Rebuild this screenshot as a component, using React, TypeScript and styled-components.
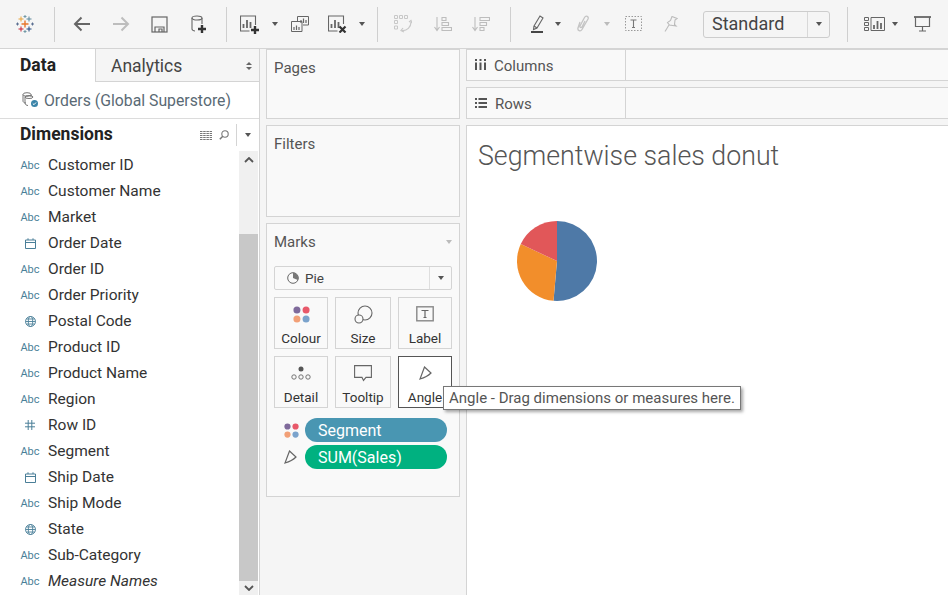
import React from 'react';
import styled, { createGlobalStyle } from 'styled-components';

const FONT = `Roboto, "Noto Sans", Arial, sans-serif`;
const TEAL = '#4a7f98';

const GlobalStyle = createGlobalStyle`
  html, body { margin: 0; padding: 0; background: #fff; overflow: hidden; }
  body { font-family: ${FONT}; }
`;

const Page = styled.div`
  position: relative;
  width: 948px;
  height: 595px;
  overflow: hidden;
  display: flex;
  flex-direction: column;
  background: #f5f5f5;
`;

const Toolbar = styled.div`
  height: 48px;
  flex: none;
  display: flex;
  align-items: center;
  border-bottom: 1px solid #d4d4d4;
  background: #f5f5f5;
`;

const ToolButton = styled.div<{ $w: number; $pl?: number }>`
  flex: none;
  box-sizing: content-box;
  width: ${p => p.$w}px;
  padding-left: ${p => p.$pl ?? 0}px;
  height: 32px;
  display: flex;
  align-items: center;
  justify-content: center;
`;

const Sep = styled.div<{ $ml: number }>`
  flex: none;
  width: 1px;
  height: 35px;
  margin-left: ${p => p.$ml}px;
  background: #cfcfcf;
`;

const Caret = styled.span<{ $c?: string }>`
  width: 0;
  height: 0;
  border-left: 3.5px solid transparent;
  border-right: 3.5px solid transparent;
  border-top: 4px solid ${p => p.$c ?? '#555'};
`;

const ModeSelect = styled.div`
  flex: none;
  width: 127px;
  height: 27px;
  margin-left: 18px;
  box-sizing: border-box;
  border: 1px solid #cdcdcd;
  border-radius: 3px;
  display: flex;
  align-items: center;
  font-size: 18px;
  color: #444;
`;

const ModeLabel = styled.div`
  flex: 1;
  padding: 0 0 2px 8px;
`;

const ModeArrow = styled.div`
  width: 21px;
  height: 100%;
  border-left: 1px solid #d8d8d8;
  display: flex;
  align-items: center;
  justify-content: center;
`;

const Body = styled.div`
  flex: 1;
  min-height: 0;
  display: flex;
`;

const DataPane = styled.div`
  flex: none;
  width: 260px;
  box-sizing: border-box;
  border-right: 1px solid #d4d4d4;
  background: #fff;
  display: flex;
  flex-direction: column;
`;

const Tabs = styled.div`
  height: 33px;
  flex: none;
  display: flex;
`;

const DataTab = styled.div`
  width: 95px;
  padding: 6px 0 0 20px;
  box-sizing: border-box;
  font-size: 17.5px;
  font-weight: 700;
  color: #222;
`;

const AnalyticsTab = styled.div`
  flex: 1;
  box-sizing: border-box;
  border-left: 1px solid #d4d4d4;
  border-bottom: 1px solid #d4d4d4;
  background: #f5f5f5;
  display: flex;
  align-items: center;
  justify-content: space-between;
  padding: 2px 7px 0 15px;
  font-size: 17.5px;
  color: #444;
`;

const Spinner = styled.span`
  display: flex;
  flex-direction: column;
  gap: 2px;
`;

const SpinUp = styled.span`
  width: 0;
  height: 0;
  border-left: 3px solid transparent;
  border-right: 3px solid transparent;
  border-bottom: 3px solid #666;
`;

const SpinDown = styled(SpinUp)`
  border-bottom: 0;
  border-top: 3px solid #666;
`;

const SourceRow = styled.div`
  height: 37px;
  flex: none;
  box-sizing: border-box;
  border-bottom: 1px solid #dcdcdc;
  display: flex;
  align-items: center;
  gap: 5px;
  padding: 0 0 0 21px;
  font-size: 15.8px;
  color: #5a6a75;
`;

const DimHeader = styled.div`
  height: 32px;
  flex: none;
  display: flex;
  align-items: center;
  padding-left: 20px;
`;

const DimTitle = styled.div`
  flex: 1;
  padding-bottom: 2px;
  font-size: 17.5px;
  font-weight: 700;
  color: #222;
`;

const HeadIcons = styled.div`
  display: flex;
  align-items: center;
  gap: 7px;
  margin-right: 7px;
`;

const HeadMenu = styled.div`
  width: 22px;
  height: 22px;
  border-left: 1px solid #d4d4d4;
  display: flex;
  align-items: center;
  justify-content: center;
`;

const FieldArea = styled.div`
  flex: 1;
  min-height: 0;
  display: flex;
`;

const FieldList = styled.div`
  flex: 1;
  padding-top: 1px;
  overflow: hidden;
`;

const FieldRow = styled.div`
  height: 26px;
  display: flex;
  align-items: center;
`;

const TypeIcon = styled.span`
  flex: none;
  width: 18px;
  margin: 0 9px 0 21px;
  display: flex;
  justify-content: center;
  font-size: 11px;
  color: ${TEAL};
`;

const FieldName = styled.span<{ $italic?: boolean }>`
  font-size: 15.5px;
  color: #333;
  white-space: nowrap;
  font-style: ${p => (p.$italic ? 'italic' : 'normal')};
`;

const Scrollbar = styled.div`
  flex: none;
  width: 19px;
  margin-right: 1px;
  background: #f0f0f0;
  display: flex;
  flex-direction: column;
`;

const ScrollEnd = styled.div<{ $h: number }>`
  height: ${p => p.$h}px;
  flex: none;
  display: flex;
  align-items: center;
  justify-content: center;
`;

const ScrollGap = styled.div`
  height: 65px;
  flex: none;
`;

const ScrollThumb = styled.div`
  flex: 1;
  background: #c8c8c8;
`;

const CardColumn = styled.div`
  flex: none;
  width: 206px;
  box-sizing: border-box;
  padding: 0 6px 98px;
  display: flex;
  flex-direction: column;
  gap: 6px;
`;

const Card = styled.div<{ $h?: number }>`
  flex: ${p => (p.$h ? 'none' : 1)};
  height: ${p => (p.$h ? `${p.$h}px` : 'auto')};
  box-sizing: border-box;
  border: 1px solid #d4d4d4;
  background: #f9f9f9;
  padding: 9px 7px 0;
`;

const CardTitle = styled.div`
  font-size: 15px;
  line-height: 18px;
  color: #555;
  display: flex;
  justify-content: space-between;
  align-items: center;
`;

const MarkSelect = styled.div`
  height: 24px;
  margin-top: 15px;
  box-sizing: border-box;
  border: 1px solid #d4d4d4;
  border-radius: 2px;
  display: flex;
  align-items: center;
  font-size: 13.5px;
  color: #444;
`;

const MarkSelectLabel = styled.div`
  flex: 1;
  display: flex;
  align-items: center;
  gap: 6px;
  padding-left: 12px;
`;

const MarkSelectArrow = styled.div`
  width: 21px;
  height: 100%;
  border-left: 1px solid #dedede;
  display: flex;
  align-items: center;
  justify-content: center;
`;

const MarkGrid = styled.div`
  margin-top: 7px;
  display: grid;
  grid-template-columns: 54px 56px 54px;
  grid-auto-rows: 52px;
  gap: 7px;
`;

const MarkButton = styled.div<{ $active?: boolean }>`
  box-sizing: border-box;
  border: 1px solid ${p => (p.$active ? '#555' : '#d4d4d4')};
  background: ${p => (p.$active ? '#fff' : '#f9f9f9')};
  display: flex;
  flex-direction: column;
  align-items: center;
  font-size: 13.5px;
  line-height: 17px;
  color: #333;
`;

const MarkIcon = styled.div`
  height: 32px;
  flex: none;
  display: flex;
  align-items: center;
  justify-content: center;
`;

const PillRow = styled.div`
  display: flex;
  align-items: center;
  height: 24px;
  padding-left: 10px;
  margin-bottom: 3px;
`;

const PillIcon = styled.div`
  width: 21px;
  flex: none;
  display: flex;
`;

const Pill = styled.div<{ $bg: string }>`
  width: 142px;
  height: 24px;
  border-radius: 12px;
  background: ${p => p.$bg};
  color: #fff;
  font-size: 16px;
  line-height: 25px;
  padding-left: 13px;
  box-sizing: border-box;
`;

const PillList = styled.div`
  margin-top: 10px;
`;

const ViewColumn = styled.div`
  flex: 1;
  min-width: 0;
  display: flex;
  flex-direction: column;
  gap: 6px;
`;

const Shelf = styled.div<{ $h: number }>`
  height: ${p => p.$h}px;
  flex: none;
  box-sizing: border-box;
  border: 1px solid #d4d4d4;
  border-right: 0;
  background: #f9f9f9;
  display: flex;
`;

const ShelfLabel = styled.div`
  width: 159px;
  box-sizing: border-box;
  border-right: 1px solid #d4d4d4;
  display: flex;
  align-items: center;
  gap: 8px;
  padding: 2px 0 0 8px;
  font-size: 15px;
  color: #555;

  svg {
    margin-bottom: 3px;
  }
`;

const ViewCard = styled.div`
  flex: 1;
  min-height: 0;
  box-sizing: border-box;
  border: 1px solid #d4d4d4;
  border-right: 0;
  border-bottom: 0;
  background: #fff;
  padding: 12px 0 0 11px;
`;

const ViewTitle = styled.div`
  font-size: 26.75px;
  font-weight: 300;
  color: #555;
  line-height: 36px;
`;

const PieWrap = styled.div`
  margin: 46px 0 0 38px;
  width: 82px;
  height: 82px;
`;

const Tooltip = styled.div`
  position: absolute;
  left: 443px;
  top: 386px;
  height: 24px;
  box-sizing: border-box;
  width: 298px;
  border: 1px solid #777;
  background: #fff;
  box-shadow: 2px 2px 3px rgba(0, 0, 0, 0.35);
  padding-left: 5px;
  font-size: 15px;
  line-height: 23px;
  color: #555;
  white-space: nowrap;
`;

const LogoIcon = () => (
  <svg width="18" height="18" viewBox="0 0 18 18" fill="none" strokeWidth="1">
    <path d="M9 5.500v7M5.500 9h7" stroke="#e8762b" strokeWidth="1.400" />
    <path d="M5 1.500v5M2.500 4h5" stroke="#e8a33b" />
    <path d="M13 1.500v5M10.500 4h5" stroke="#5b879b" />
    <path d="M5 11.500v5M2.500 14h5" stroke="#c72035" />
    <path d="M13 11.500v5M10.500 14h5" stroke="#1f447e" />
    <path d="M9 0v3M7.500 1.500h3M9 15v3M7.500 16.500h3" stroke="#7199a6" />
    <path d="M1.500 7.500v3M0 9h3M16.500 7.500v3M15 9h3" stroke="#5b6f91" />
  </svg>
);

const Arrow = ({ c, flip }: { c: string; flip?: boolean }) => (
  <svg width="18" height="16" viewBox="0 0 18 16" fill="none" stroke={c} strokeWidth="2" style={flip ? { transform: 'scaleX(-1)' } : undefined}>
    <path d="M17 8H2M8.500 1.500 2 8l6.500 6.500" />
  </svg>
);

const SaveIcon = () => (
  <svg width="17" height="17" viewBox="0 0 17 17" fill="none" stroke="#666" strokeWidth="1.200">
    <rect x="1" y="1" width="15" height="15" />
    <path d="M4 16v-5h9v5M8 16v-3h3v3" />
  </svg>
);

const Plus = ({ x, y }: { x: number; y: number }) => (
  <path d={`M${x - 4} ${y}h8M${x} ${y - 4}v8`} stroke="#333" strokeWidth="2.400" fill="none" />
);

const DataAddIcon = () => (
  <svg width="16" height="19" viewBox="0 0 16 19" fill="none" stroke="#666" strokeWidth="1.100">
    <ellipse cx="6" cy="3" rx="5" ry="2" />
    <path d="M1 3v11c0 1 1.500 2 3 2M11 3v6" />
    <Plus x={11} y={14} />
  </svg>
);

const Bars = ({ x, y, c = '#666' }: { x: number; y: number; c?: string }) => (
  <path d={`M${x} ${y}v-4M${x + 3.5} ${y}v-8M${x + 7} ${y}v-6`} stroke={c} strokeWidth="1.800" fill="none" />
);

const NewSheetIcon = () => (
  <svg width="20" height="19" viewBox="0 0 20 19" fill="none" stroke="#666" strokeWidth="1.100">
    <path d="M15.500 10V1H.5v15h9" />
    <Bars x={3.5} y={13} />
    <Plus x={15} y={15} />
  </svg>
);

const DuplicateIcon = () => (
  <svg width="18" height="16" viewBox="0 0 18 16" fill="none" stroke="#666" strokeWidth="1">
    <path d="M6.500 5V.5h11V9H12" />
    <path d="M.5 5.500H11v10H.5z" />
    <path d="M10 7V4M12.500 7V2.500M15 7V4M3 14v-3M5.500 14v-4.500M8 14v-3" strokeWidth="1.200" />
  </svg>
);

const ClearIcon = () => (
  <svg width="19" height="18" viewBox="0 0 19 18" fill="none" stroke="#666" strokeWidth="1.100">
    <path d="M15.500 9V1H.5v15h9" />
    <Bars x={3.5} y={13} />
    <path d="M11.500 11.500l6 6M17.500 11.500l-6 6" stroke="#333" strokeWidth="2.200" />
  </svg>
);

const SwapIcon = () => (
  <svg width="18" height="18" viewBox="0 0 18 18" fill="none" stroke="#c8c8c8" strokeWidth="1">
    <path d="M.5.5h3v3h-3zM5.500.5h3v3h-3zM10.500.5h3v3h-3zM.5 5.500h3v3h-3zM.5 11h3v3h-3z" />
    <path d="M17 7c0 5-4 9-9 8.500M15 7l2-1.500L18 8M9 13l-2 2.500L10 17" strokeWidth="1.200" />
  </svg>
);

const SortIcon = ({ flip }: { flip?: boolean }) => (
  <svg width="18" height="16" viewBox="0 0 18 16" fill="none" stroke="#bdbdbd" strokeWidth="1.100">
    <path d="M3 1v13M.5 11 3 14.500 5.500 11" />
    {flip ? (
      <path d="M8 1.500h9.500v3H8zM8 6.500h6.500v3H8zM8 11.500h4v3H8z" />
    ) : (
      <path d="M8 1.500h4v3H8zM8 6.500h6.500v3H8zM8 11.500h9.500v3H8z" />
    )}
  </svg>
);

const HighlightIcon = () => (
  <svg width="13" height="18" viewBox="0 0 13 18" fill="none" stroke="#666" strokeWidth="1.100">
    <path d="M3 11l6-10 3 2-6 10-3.500 1.500z" />
    <path d="M3 11l3 2" />
    <path d="M0 17h12" stroke="#333" strokeWidth="1.800" />
  </svg>
);

const ClipIcon = () => (
  <svg width="14" height="18" viewBox="0 0 14 18" fill="none" stroke="#c4c4c4" strokeWidth="1.300">
    <path d="M4 7l-2 6c-.7 2.500 2.500 4 4 1.500L12 4c1-2.500-2-4-3.500-1.500L4 11c-.5 1.500 1 2 2 1l3-6" />
  </svg>
);

const TextBoxIcon = () => (
  <svg width="18" height="16" viewBox="0 0 18 16" fill="none">
    <rect x=".5" y=".5" width="16" height="14" stroke="#999" strokeDasharray="1.500 1.500" />
    <path d="M5.500 4h6M8.500 4v7.500M7 11.500h3" stroke="#777" strokeWidth="1.100" />
  </svg>
);

const PinIcon = () => (
  <svg width="14" height="16" viewBox="0 0 14 16" fill="none" stroke="#bbb" strokeWidth="1.100">
    <path d="M8 .5 13 2.500 11 4l-.5 4.500L12 10 5.500 9 3.500 6.500 6.500 4.500z" />
    <path d="M5 9 1 15.500" />
  </svg>
);

const ShowMeIcon = () => (
  <svg width="21" height="14" viewBox="0 0 21 14" fill="none" stroke="#666" strokeWidth="1">
    <path d="M.5.5h4v3h-4zM.5 5.500h4v3h-4zM.5 10.500h4v3h-4zM7 .5h13.500v13H7z" />
    <Bars x={10} y={12} />
  </svg>
);

const PresentIcon = () => (
  <svg width="17" height="16" viewBox="0 0 17 16" fill="none" stroke="#666" strokeWidth="1.200">
    <path d="M0 1h17" strokeWidth="1.800" />
    <path d="M1.500 1v9.500h14V1M8.500 10.500V15M5 15h7" />
  </svg>
);

const SourceIcon = () => (
  <svg width="18" height="16" viewBox="0 0 18 16" fill="none" stroke="#777" strokeWidth="1">
    <ellipse cx="6" cy="2.500" rx="4" ry="1.800" />
    <path d="M2 2.500V9c0 1 1 2 3 2M10 2.500V5" />
    <ellipse cx="8" cy="5" rx="4" ry="1.500" />
    <path d="M4 5v6c0 1.500 1.500 2.500 3 2.500" />
    <circle cx="13.500" cy="11.500" r="3.500" fill="#3a84a8" stroke="none" />
    <path d="M11.800 11.500l1.200 1.200 2-2.200" stroke="#fff" />
  </svg>
);

const ListViewIcon = () => (
  <svg width="12" height="9" viewBox="0 0 12 9" fill="none" stroke="#777">
    <path d="M0 .5h12M0 2.500h12M0 4.500h12M0 6.500h12M0 8.500h12" strokeDasharray="2.500 .7" />
  </svg>
);

const SearchIcon = () => (
  <svg width="10" height="10" viewBox="0 0 10 10" fill="none" stroke="#777" strokeWidth="1.100">
    <circle cx="6" cy="4" r="3.200" />
    <path d="M3.800 6.300.8 9.300" strokeWidth="1.500" />
  </svg>
);

const Chevron = ({ down }: { down?: boolean }) => (
  <svg width="10" height="6" viewBox="0 0 10 6" fill="none" stroke="#555" strokeWidth="1.800">
    <path d={down ? 'M1 1l4 4 4-4' : 'M1 5l4-4 4 4'} />
  </svg>
);

const CalendarIcon = () => (
  <svg width="11" height="11" viewBox="0 0 11 11" fill="none" stroke={TEAL} strokeWidth="1">
    <path d="M.5 2h10v8.500H.5zM.5 4.500h10M3 .3V2M8 .3V2" />
  </svg>
);

const GlobeIcon = () => (
  <svg width="11" height="11" viewBox="0 0 11 11" fill="none" stroke={TEAL} strokeWidth=".9">
    <circle cx="5.500" cy="5.500" r="5" />
    <ellipse cx="5.500" cy="5.500" rx="2.200" ry="5" />
    <path d="M.5 5.500h10M1.200 3h8.600M1.200 8h8.600" />
  </svg>
);

const HashIcon = () => (
  <svg width="10" height="10" viewBox="0 0 10 10" fill="none" stroke={TEAL} strokeWidth="1">
    <path d="M3.200 0v10M6.800 0v10M0 3.200h10M0 6.800h10" />
  </svg>
);

const PieMarkIcon = () => (
  <svg width="12" height="12" viewBox="0 0 12 12" fill="none" stroke="#666">
    <circle cx="6" cy="6" r="5.300" />
    <path d="M6 6V.7A5.300 5.300 0 0 1 10.800 8z" fill="#777" stroke="none" />
  </svg>
);

const ColourDots = ({ size }: { size: number }) => (
  <svg width={size} height={size} viewBox="0 0 16 16">
    <circle cx="3.700" cy="3.700" r="3.300" fill="#7f6a9b" />
    <circle cx="12.300" cy="3.700" r="3.300" fill="#e8596a" />
    <circle cx="3.700" cy="12.300" r="3.300" fill="#f2a077" />
    <circle cx="12.300" cy="12.300" r="3.300" fill="#7ba3cc" />
  </svg>
);

const SizeIcon = () => (
  <svg width="19" height="19" viewBox="0 0 19 19" fill="none" stroke="#666" strokeWidth="1.100">
    <circle cx="11" cy="8" r="7" />
    <circle cx="5" cy="14" r="4" fill="#f9f9f9" />
  </svg>
);

const LabelIcon = () => (
  <svg width="18" height="16" viewBox="0 0 18 16" fill="none">
    <rect x=".8" y=".8" width="16.400" height="14" stroke="#888" strokeWidth="1.400" />
    <path d="M5.500 4.500h7M9 4.500v7M7.500 11.500h3" stroke="#666" strokeWidth="1.200" />
  </svg>
);

const DetailIcon = () => (
  <svg width="20" height="15" viewBox="0 0 20 15" fill="none" stroke="#666" strokeWidth=".9">
    <circle cx="10" cy="3" r="2.500" fill="#555" stroke="none" />
    <circle cx="3" cy="11" r="2.200" />
    <circle cx="10" cy="11" r="2.200" />
    <circle cx="17" cy="11" r="2.200" />
  </svg>
);

const TooltipIcon = () => (
  <svg width="18" height="17" viewBox="0 0 18 17" fill="none" stroke="#666" strokeWidth="1.100">
    <path d="M.6.600h16.800v11.800h-5.400l-2.500 3-1.500-3H.6z" />
  </svg>
);

const AngleIcon = ({ c = '#666' }: { c?: string }) => (
  <svg width="13" height="14" viewBox="0 0 13 14" fill="none" stroke={c} strokeWidth="1.200">
    <path d="M5.500 1 12 7Q8 11 1 13Z" />
  </svg>
);

// pie slices: blue from 12 o'clock to just past 6, then orange, then red
function piePath(from: number, to: number): string {
  const r = 40;
  const c = 41;
  const pt = (deg: number) => {
    const a = ((deg - 90) * Math.PI) / 180;
    return `${c + r * Math.cos(a)} ${c + r * Math.sin(a)}`;
  };
  return `M${c} ${c}L${pt(from)}A${r} ${r} 0 ${to - from > 180 ? 1 : 0} 1 ${pt(to)}Z`;
}

const FIELDS: { name: string; type: 'abc' | 'date' | 'geo' | 'num'; italic?: boolean }[] = [
  { name: 'Customer ID', type: 'abc' },
  { name: 'Customer Name', type: 'abc' },
  { name: 'Market', type: 'abc' },
  { name: 'Order Date', type: 'date' },
  { name: 'Order ID', type: 'abc' },
  { name: 'Order Priority', type: 'abc' },
  { name: 'Postal Code', type: 'geo' },
  { name: 'Product ID', type: 'abc' },
  { name: 'Product Name', type: 'abc' },
  { name: 'Region', type: 'abc' },
  { name: 'Row ID', type: 'num' },
  { name: 'Segment', type: 'abc' },
  { name: 'Ship Date', type: 'date' },
  { name: 'Ship Mode', type: 'abc' },
  { name: 'State', type: 'geo' },
  { name: 'Sub-Category', type: 'abc' },
  { name: 'Measure Names', type: 'abc', italic: true },
];

const typeIcon = (type: string) => {
  if (type === 'date') return <CalendarIcon />;
  if (type === 'geo') return <GlobeIcon />;
  if (type === 'num') return <HashIcon />;
  return 'Abc';
};

export default function App() {
  return (
    <Page>
      <GlobalStyle />
      <Toolbar>
        <ToolButton $w={50}><LogoIcon /></ToolButton>
        <Sep $ml={4} />
        <ToolButton $w={39} $pl={7}><Arrow c="#666" /></ToolButton>
        <ToolButton $w={39}><Arrow c="#bdbdbd" flip /></ToolButton>
        <ToolButton $w={39}><SaveIcon /></ToolButton>
        <ToolButton $w={39}><DataAddIcon /></ToolButton>
        <Sep $ml={8} />
        <ToolButton $w={34} $pl={6}><NewSheetIcon /></ToolButton>
        <ToolButton $w={16}><Caret /></ToolButton>
        <ToolButton $w={34}><DuplicateIcon /></ToolButton>
        <ToolButton $w={40}><ClearIcon /></ToolButton>
        <ToolButton $w={10}><Caret /></ToolButton>
        <Sep $ml={10} />
        <ToolButton $w={38} $pl={6}><SwapIcon /></ToolButton>
        <ToolButton $w={42}><SortIcon /></ToolButton>
        <ToolButton $w={34}><SortIcon flip /></ToolButton>
        <Sep $ml={12} />
        <ToolButton $w={32} $pl={10}><HighlightIcon /></ToolButton>
        <ToolButton $w={10}><Caret /></ToolButton>
        <ToolButton $w={40}><ClipIcon /></ToolButton>
        <ToolButton $w={8}><Caret $c="#bbb" /></ToolButton>
        <ToolButton $w={46}><TextBoxIcon /></ToolButton>
        <ToolButton $w={28}><PinIcon /></ToolButton>
        <ModeSelect>
          <ModeLabel>Standard</ModeLabel>
          <ModeArrow><Caret /></ModeArrow>
        </ModeSelect>
        <Sep $ml={17} />
        <ToolButton $w={36} $pl={8}><ShowMeIcon /></ToolButton>
        <ToolButton $w={6}><Caret /></ToolButton>
        <ToolButton $w={48}><PresentIcon /></ToolButton>
      </Toolbar>
      <Body>
        <DataPane>
          <Tabs>
            <DataTab>Data</DataTab>
            <AnalyticsTab>
              Analytics
              <Spinner><SpinUp /><SpinDown /></Spinner>
            </AnalyticsTab>
          </Tabs>
          <SourceRow><SourceIcon />Orders (Global Superstore)</SourceRow>
          <DimHeader>
            <DimTitle>Dimensions</DimTitle>
            <HeadIcons><ListViewIcon /><SearchIcon /></HeadIcons>
            <HeadMenu><Caret /></HeadMenu>
          </DimHeader>
          <FieldArea>
            <FieldList>
              {FIELDS.map(f => (
                <FieldRow key={f.name}>
                  <TypeIcon>{typeIcon(f.type)}</TypeIcon>
                  <FieldName $italic={f.italic}>{f.name}</FieldName>
                </FieldRow>
              ))}
            </FieldList>
            <Scrollbar>
              <ScrollEnd $h={18}><Chevron /></ScrollEnd>
              <ScrollGap />
              <ScrollThumb />
              <ScrollEnd $h={14}><Chevron down /></ScrollEnd>
            </Scrollbar>
          </FieldArea>
        </DataPane>
        <CardColumn>
          <Card $h={70}><CardTitle>Pages</CardTitle></Card>
          <Card $h={92}><CardTitle>Filters</CardTitle></Card>
          <Card>
            <CardTitle>Marks<Caret $c="#bbb" /></CardTitle>
            <MarkSelect>
              <MarkSelectLabel><PieMarkIcon />Pie</MarkSelectLabel>
              <MarkSelectArrow><Caret /></MarkSelectArrow>
            </MarkSelect>
            <MarkGrid>
              <MarkButton><MarkIcon><ColourDots size={17} /></MarkIcon>Colour</MarkButton>
              <MarkButton><MarkIcon><SizeIcon /></MarkIcon>Size</MarkButton>
              <MarkButton><MarkIcon><LabelIcon /></MarkIcon>Label</MarkButton>
              <MarkButton><MarkIcon><DetailIcon /></MarkIcon>Detail</MarkButton>
              <MarkButton><MarkIcon><TooltipIcon /></MarkIcon>Tooltip</MarkButton>
              <MarkButton $active><MarkIcon><AngleIcon /></MarkIcon>Angle</MarkButton>
            </MarkGrid>
            <PillList>
              <PillRow><PillIcon><ColourDots size={15} /></PillIcon><Pill $bg="#4996b2">Segment</Pill></PillRow>
              <PillRow><PillIcon><AngleIcon /></PillIcon><Pill $bg="#00b180">SUM(Sales)</Pill></PillRow>
            </PillList>
          </Card>
        </CardColumn>
        <ViewColumn>
          <Shelf $h={32}>
            <ShelfLabel>
              <svg width="11" height="11" viewBox="0 0 11 11" fill="#555"><path d="M0 0h2v2H0zM4.500 0h2v2h-2zM9 0h2v2H9zM0 3.500h2V11H0zM4.500 3.500h2V11h-2zM9 3.500h2V11H9z" /></svg>
              Columns
            </ShelfLabel>
          </Shelf>
          <Shelf $h={32}>
            <ShelfLabel>
              <svg width="12" height="10" viewBox="0 0 12 10" fill="#555"><path d="M0 0h2v2H0zM3.500 0H12v2H3.500zM0 4h2v2H0zM3.500 4H12v2H3.500zM0 8h2v2H0zM3.500 8H12v2H3.500z" /></svg>
              Rows
            </ShelfLabel>
          </Shelf>
          <ViewCard>
            <ViewTitle>Segmentwise sales donut</ViewTitle>
            <PieWrap>
              <svg width="82" height="82" viewBox="0 0 82 82">
                <path d={piePath(0, 185)} fill="#4e79a7" />
                <path d={piePath(185, 295)} fill="#f28e2b" />
                <path d={piePath(295, 360)} fill="#e15759" />
              </svg>
            </PieWrap>
          </ViewCard>
        </ViewColumn>
      </Body>
      <Tooltip>Angle - Drag dimensions or measures here.</Tooltip>
    </Page>
  );
}
